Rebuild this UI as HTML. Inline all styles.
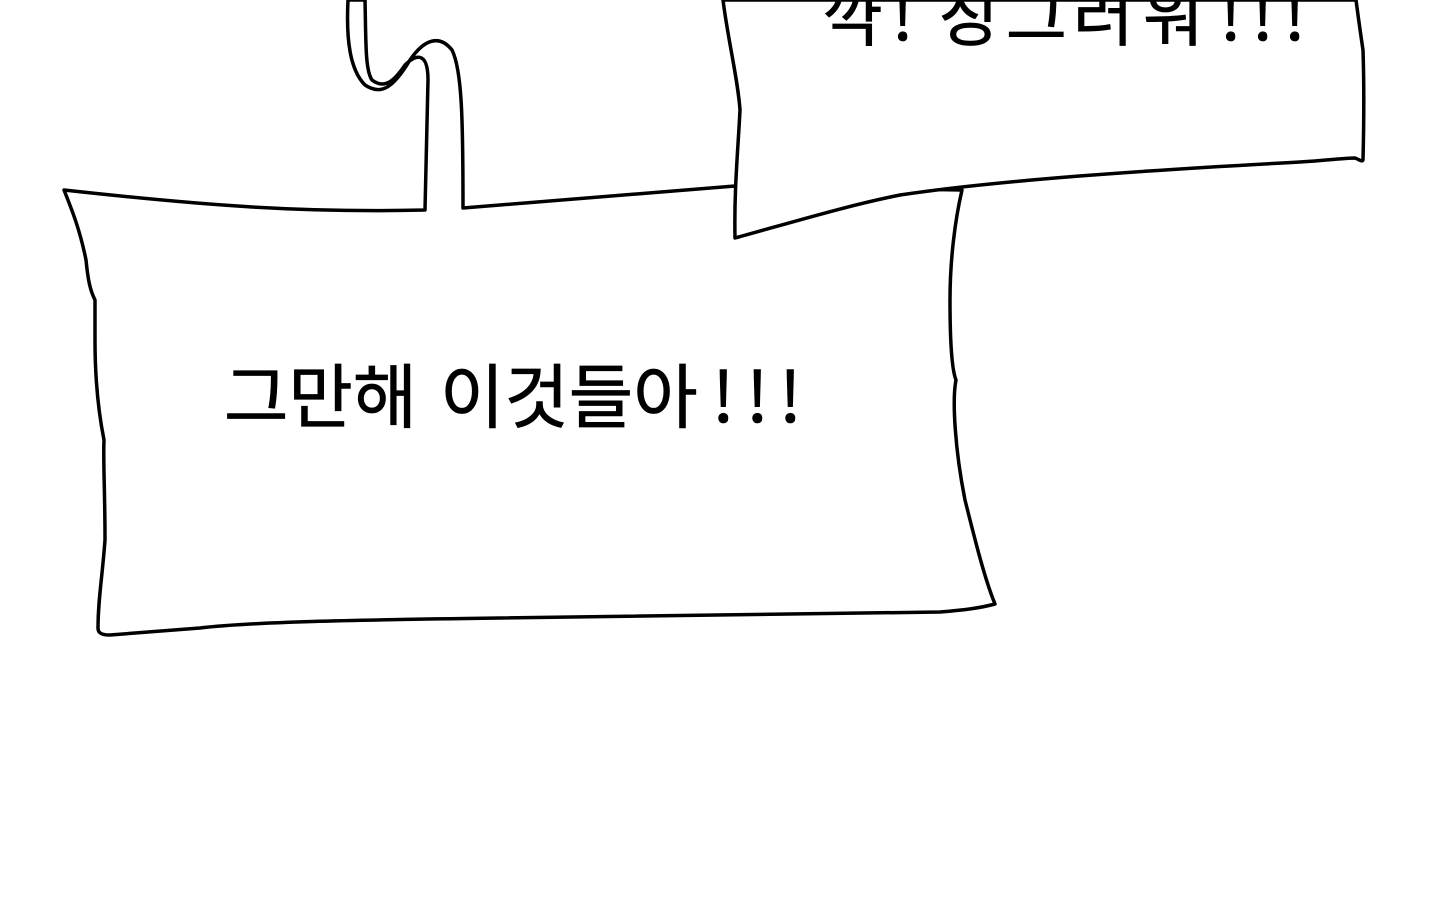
<!DOCTYPE html>
<html><head><meta charset="utf-8"><style>
html,body{margin:0;padding:0;background:#fff;width:1440px;height:916px;overflow:hidden}
svg{display:block}
text{font-family:"Noto Sans CJK KR","Liberation Sans",sans-serif;font-weight:400;fill:#000;stroke:#000;stroke-width:0.8}
</style></head><body>
<svg width="1440" height="916" viewBox="0 0 1440 916">
<g fill="#fff" stroke="#000" stroke-width="3.5" stroke-linejoin="round" stroke-linecap="round">
<path d="M64,190 C200,205 300,213 425,210 L428,80 C428,50 415,55 405,65 C395,80 385,90 372,80 C365,70 366,40 365,0 L348,0 C346,40 350,70 365,85 C380,95 392,90 410,60 C425,38 440,35 452,50 C462,70 463,120 463,208 L735,186 L962,190 C955,220 950,260 950,300 C950,340 952,370 956,380 C952,400 955,450 965,500 C975,540 985,580 995,604 C980,608 965,610 940,612 L500,618 C350,620 250,622 200,628 L110,635 C100,635 98,632 98,628 C98,600 102,580 105,540 C105,490 103,460 104,440 C98,410 95,380 95,340 L95,300 C90,290 88,280 86,260 C80,230 72,210 64,190 Z"/>
<path d="M723,0 C728,40 738,80 740,110 C738,150 734,190 735,238 C800,220 850,205 900,195 C1000,180 1150,170 1300,162 C1330,160 1345,158 1355,158 C1360,160 1362,162 1363,160 C1364,120 1364,80 1363,50 C1360,30 1358,15 1356,0 Z"/>
</g>
<text y="40" font-size="66"><tspan x="822">꺅</tspan><tspan x="892">!</tspan><tspan x="938">징</tspan><tspan x="1006">그</tspan><tspan x="1073">러</tspan><tspan x="1143">워</tspan><tspan x="1220">!</tspan><tspan x="1252">!</tspan><tspan x="1284">!</tspan></text>
<text y="422" font-size="70"><tspan x="224">그만해</tspan><tspan x="440">이것들아</tspan><tspan x="712">!</tspan><tspan x="746">!</tspan><tspan x="779">!</tspan></text>
</svg>
</body></html>
